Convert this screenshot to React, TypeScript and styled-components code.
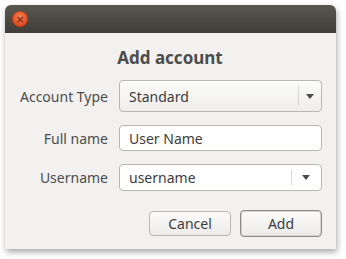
import React from 'react';
import styled, { createGlobalStyle } from 'styled-components';

const Global = createGlobalStyle`
  html, body {
    margin: 0;
    padding: 0;
    background: #ffffff;
  }
  body {
    font-family: 'Noto Sans', 'Open Sans', sans-serif;
    color: #4c4c4c;
  }
`;

const Stage = styled.div`
  width: 346px;
  height: 259px;
  padding: 5px 0 0 5px;
  box-sizing: border-box;
`;

const Window = styled.div`
  width: 331px;
  height: 244px;
  border-radius: 6px 6px 0 0;
  background: #f2f1f0;
  box-shadow: 1px 3px 6px rgba(0, 0, 0, 0.35);
  display: flex;
  flex-direction: column;
  overflow: hidden;
`;

const TitleBar = styled.div`
  height: 28px;
  flex: none;
  background: linear-gradient(#59574f, #3e3d39);
  display: flex;
  align-items: center;
  padding-left: 7px;
`;

const CloseButton = styled.div`
  width: 16px;
  height: 16px;
  border-radius: 50%;
  background: radial-gradient(circle at 50% 35%, #f57d4f, #e2491f 70%);
  box-shadow: inset 0 0 0 1px rgba(120, 30, 0, 0.35);
  display: flex;
  align-items: center;
  justify-content: center;
  color: #5a2413;
  font-family: 'DejaVu Sans', sans-serif;
  font-size: 11px;
  line-height: 1;
`;

const Body = styled.div`
  flex: 1;
  display: flex;
  flex-direction: column;
  padding: 14px 14px 0 13px;
`;

const Heading = styled.h1`
  margin: 0 0 11px;
  text-align: center;
  font-size: 17px;
  font-weight: bold;
  color: #4c4c4c;
  line-height: 22px;
`;

const Form = styled.div`
  display: grid;
  grid-template-columns: 90px 1fr;
  column-gap: 11px;
  row-gap: 13px;
  align-items: center;
`;

const Label = styled.label`
  text-align: right;
  font-size: 14px;
  color: #4c4c4c;
  white-space: nowrap;
`;

const Field = styled.div<{ $h: number }>`
  height: ${(p) => p.$h}px;
  box-sizing: border-box;
  border: 1px solid #b9b7b3;
  border-radius: 4px;
  background: #ffffff;
  display: flex;
  align-items: stretch;
  font-size: 14px;
  color: #3c3c3c;
`;

const ComboBox = styled(Field)`
  background: linear-gradient(#fbfbfa, #efeeec);
`;

const FieldText = styled.div`
  flex: 1;
  display: flex;
  align-items: center;
  padding-left: 9px;
`;

const Arrow = styled.div<{ $w: number }>`
  width: ${(p) => p.$w}px;
  display: flex;
  align-items: center;
  justify-content: center;
  position: relative;
  &::before {
    content: '';
    position: absolute;
    left: 0;
    top: 5px;
    bottom: 5px;
    border-left: 1px solid #d8d6d2;
  }
`;

const Buttons = styled.div`
  margin-top: 20px;
  display: flex;
  justify-content: flex-end;
  gap: 9px;
`;

const Button = styled.button<{ $default?: boolean }>`
  width: 82px;
  height: ${(p) => (p.$default ? 27 : 25)}px;
  box-sizing: border-box;
  border-radius: 4px;
  border: 1px solid ${(p) => (p.$default ? '#8d8b87' : '#b9b7b3')};
  box-shadow: ${(p) => (p.$default ? 'inset 0 0 0 1px #d4d2ce' : 'none')};
  background: linear-gradient(#fbfbfa, #ecebe9);
  font-family: 'Noto Sans', 'Open Sans', sans-serif;
  font-size: 14px;
  color: #3c3c3c;
  padding: 0;
  margin-top: ${(p) => (p.$default ? -1 : 0)}px;
`;

const Caret = () => (
  <svg width="8" height="5" viewBox="0 0 8 5">
    <path d="M0 0 H8 L4 5 Z" fill="#4c4c4c" />
  </svg>
);

export default function App() {
  return (
    <>
      <Global />
      <Stage>
        <Window>
          <TitleBar>
            <CloseButton>×</CloseButton>
          </TitleBar>
          <Body>
            <Heading>Add account</Heading>
            <Form>
              <Label>Account Type</Label>
              <ComboBox $h={32}>
                <FieldText>Standard</FieldText>
                <Arrow $w={23}>
                  <Caret />
                </Arrow>
              </ComboBox>
              <Label>Full name</Label>
              <Field $h={26}>
                <FieldText>User Name</FieldText>
              </Field>
              <Label>Username</Label>
              <Field $h={27}>
                <FieldText>username</FieldText>
                <Arrow $w={30}>
                  <Caret />
                </Arrow>
              </Field>
            </Form>
            <Buttons>
              <Button>Cancel</Button>
              <Button $default>Add</Button>
            </Buttons>
          </Body>
        </Window>
      </Stage>
    </>
  );
}
